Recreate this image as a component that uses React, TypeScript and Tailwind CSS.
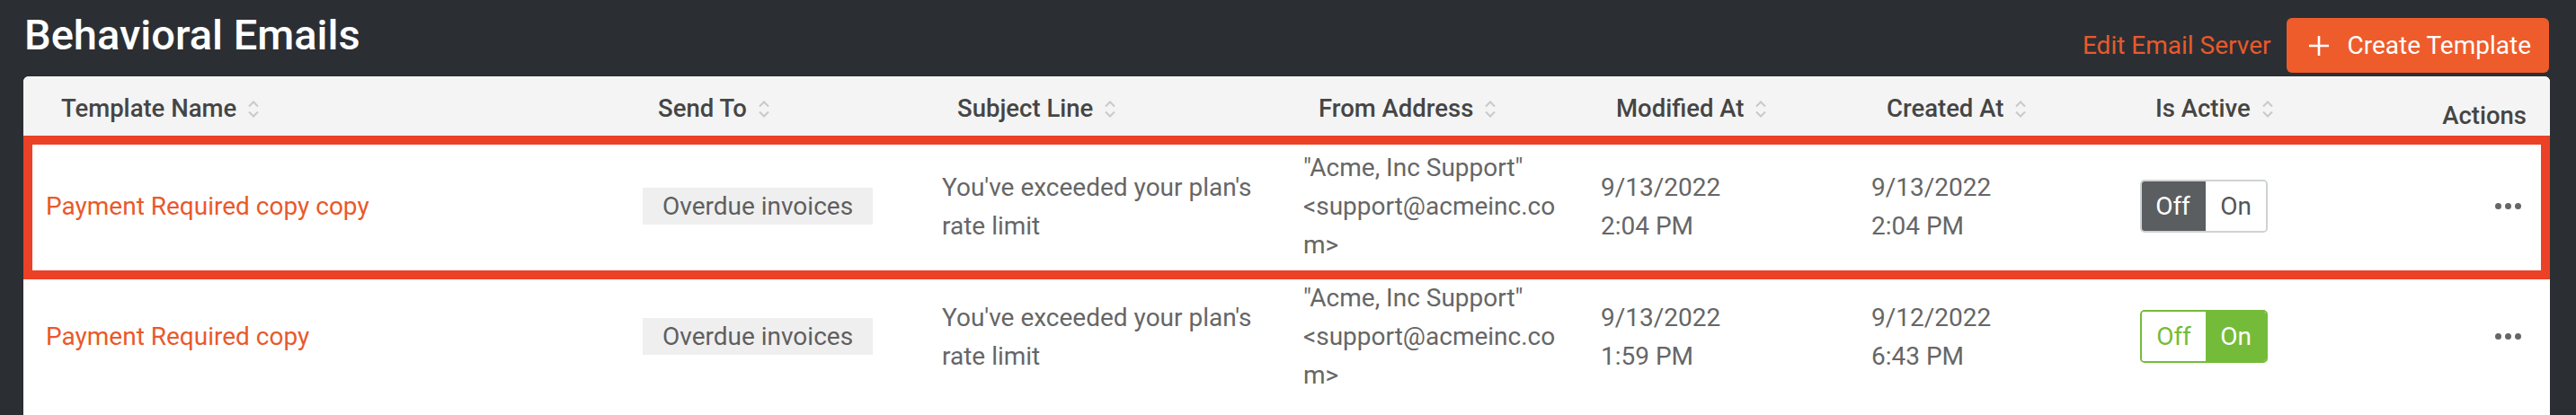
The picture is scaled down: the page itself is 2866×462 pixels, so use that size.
import React from "react";

type Row = {
  name: string;
  sendTo: string;
  subject: string;
  from: string;
  modified: [string, string];
  created: [string, string];
  active: boolean;
};

const rows: Row[] = [
  {
    name: "Payment Required copy copy",
    sendTo: "Overdue invoices",
    subject: "You've exceeded your plan's rate limit",
    from: '"Acme, Inc Support" <support@acmeinc.com>',
    modified: ["9/13/2022", "2:04 PM"],
    created: ["9/13/2022", "2:04 PM"],
    active: false,
  },
  {
    name: "Payment Required copy",
    sendTo: "Overdue invoices",
    subject: "You've exceeded your plan's rate limit",
    from: '"Acme, Inc Support" <support@acmeinc.com>',
    modified: ["9/13/2022", "1:59 PM"],
    created: ["9/12/2022", "6:43 PM"],
    active: true,
  },
];

// name | send to | subject | from | modified | created | active | actions
const cols = "grid grid-cols-[664px_333px_402px_331px_301px_299px_300px_181px]";

const SortIcon = () => (
  <svg width="14" height="19" viewBox="0 0 14 19" fill="none" className="ml-[12px]">
    <path d="M2 6.5 L7 1.5 L12 6.5" stroke="#c9c9c9" strokeWidth="2" />
    <path d="M2 12.5 L7 17.5 L12 12.5" stroke="#c9c9c9" strokeWidth="2" />
  </svg>
);

const HeadCell = ({ label }: { label: string }) => (
  <div className="flex items-center pl-[42px]">
    <span>{label}</span>
    <SortIcon />
  </div>
);

const Toggle = ({ on }: { on: boolean }) => {
  if (on) {
    return (
      <div className="flex h-[59px] w-[142px] overflow-hidden rounded-[5px] border-2 border-[#74bb3a] text-[28px] leading-none">
        <div className="flex w-[71px] items-center justify-center bg-white text-[#74bb3a]">Off</div>
        <div className="flex flex-1 items-center justify-center bg-[#74bb3a] text-white">On</div>
      </div>
    );
  }
  return (
    <div className="flex h-[59px] w-[142px] overflow-hidden rounded-[5px] border-2 border-[#cfd2d3] text-[28px] leading-none">
      <div className="-m-[2px] mr-0 flex w-[73px] items-center justify-center bg-[#5a5e61] text-white">Off</div>
      <div className="flex flex-1 items-center justify-center bg-white text-[#555]">On</div>
    </div>
  );
};

const Dots = () => (
  <div className="flex gap-[4px]">
    <span className="h-[7px] w-[7px] rounded-full bg-[#666]" />
    <span className="h-[7px] w-[7px] rounded-full bg-[#666]" />
    <span className="h-[7px] w-[7px] rounded-full bg-[#666]" />
  </div>
);

export default function App() {
  return (
    <div className="h-[462px] w-full overflow-hidden bg-[#2b2f33] font-['Roboto',sans-serif]">
      <div className="flex h-[85px] items-start justify-between pl-[27px] pr-[30px]">
        <h1 className="mt-[15px] text-[47px] font-medium leading-[47px] text-white">Behavioral Emails</h1>
        <div className="mt-[20px] flex items-center gap-[17px]">
          <a className="text-[28px] text-[#e9592b]">Edit Email Server</a>
          <button className="flex h-[61px] items-center gap-[20px] rounded-[6px] bg-[#ee5c2c] pl-[24px] pr-[20px] text-[28px] text-white">
            <svg width="24" height="24" viewBox="0 0 24 24" fill="none">
              <path d="M12 1 V23 M1 12 H23" stroke="#fff" strokeWidth="2.6" />
            </svg>
            Create Template
          </button>
        </div>
      </div>

      <div className="relative ml-[26px] mr-[29px] rounded-t-[6px] bg-white pb-[60px]">
        <div className={`${cols} h-[72px] rounded-t-[6px] bg-[#f4f4f4] text-[27.5px] font-medium text-[#454545]`}>
          <HeadCell label="Template Name" />
          <HeadCell label="Send To" />
          <HeadCell label="Subject Line" />
          <HeadCell label="From Address" />
          <HeadCell label="Modified At" />
          <HeadCell label="Created At" />
          <HeadCell label="Is Active" />
          <div className="flex items-center justify-end pr-[26px] pt-[16px]">Actions</div>
        </div>

        {rows.map((row) => (
          <div key={row.name} className={`${cols} h-[145px] text-[28px] leading-[43px] text-[#666]`}>
            <div className="flex items-center pl-[25px] text-[#e9592b]">{row.name}</div>
            <div className="flex items-center pl-[25px]">
              <span className="bg-[#efefef] px-[22px] leading-[41px] text-[#5f5f5f]">{row.sendTo}</span>
            </div>
            <div className="flex items-center pl-[25px]">
              <p className="w-[370px]">{row.subject}</p>
            </div>
            <div className="flex items-center pl-[25px]">
              <p className="w-[292px] break-words">{row.from}</p>
            </div>
            <div className="flex flex-col justify-center pl-[25px]">
              <span>{row.modified[0]}</span>
              <span>{row.modified[1]}</span>
            </div>
            <div className="flex flex-col justify-center pl-[25px]">
              <span>{row.created[0]}</span>
              <span>{row.created[1]}</span>
            </div>
            <div className="flex items-center pl-[25px]">
              <Toggle on={row.active} />
            </div>
            <div className="flex items-center justify-end pr-[32px]">
              <Dots />
            </div>
          </div>
        ))}

        {/* annotation outline around the first row */}
        <div className="pointer-events-none absolute inset-x-0 top-[66px] h-[160px] border-[10px] border-[#ea4127]" />
      </div>
    </div>
  );
}
